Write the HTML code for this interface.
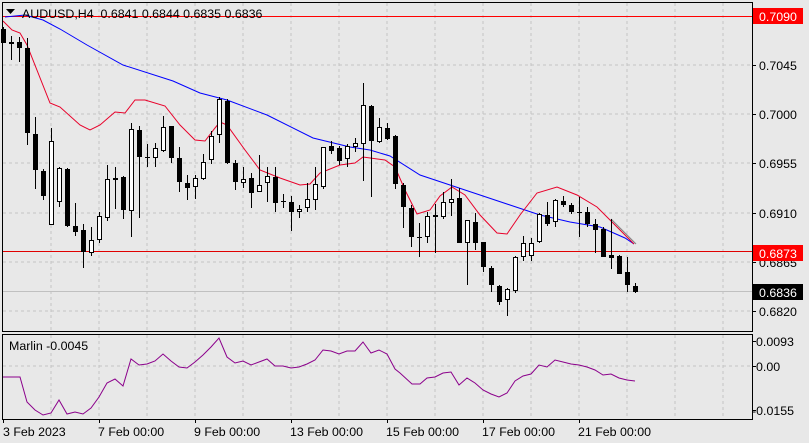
<!DOCTYPE html>
<html><head><meta charset="utf-8"><style>
html,body{margin:0;padding:0;background:#e8e8e8;}
svg{display:block;}
text{font-family:"Liberation Sans",sans-serif;font-size:12.4px;fill:#000;}
</style></head><body>
<svg width="809" height="443" viewBox="0 0 809 443" xmlns="http://www.w3.org/2000/svg">
<rect width="809" height="443" fill="#e8e8e8"/>
<g stroke="#c4c4c4" stroke-dasharray="3,3" stroke-width="1" shape-rendering="crispEdges">
<path d="M51 3V331M99 3V331M147 3V331M195 3V331M243 3V331M291 3V331M339 3V331M387 3V331M435 3V331M483 3V331M531 3V331M579 3V331M627 3V331M675 3V331M723 3V331"/>
<path d="M3 65H752M3 114H752M3 163H752M3 213H752M3 262H752M3 311H752"/>
<path d="M51 335V418M99 335V418M147 335V418M195 335V418M243 335V418M291 335V418M339 335V418M387 335V418M435 335V418M483 335V418M531 335V418M579 335V418M627 335V418M675 335V418M723 335V418"/>
<path d="M3 366H752"/>
</g>
<g shape-rendering="crispEdges">
<line x1="3" y1="16.5" x2="752" y2="16.5" stroke="#ff0000"/>
<line x1="3" y1="251.5" x2="752" y2="251.5" stroke="#e00000"/>
<line x1="3" y1="291.5" x2="752" y2="291.5" stroke="#c0c0c0"/>
</g>
<polyline fill="none" stroke="#0000ff" stroke-width="1" points="5,17 25,15 43,20 60,29 87,45 123,65 173,81 200,93 227,100 267,115 313,138 350,147 370,150 390,156 420,175 450,185 480,195 510,205 540,215 570,222 600,227 625,238 634,244"/>
<polyline fill="none" stroke="#e8002a" stroke-width="1" points="3,21 12,30 20,33 27,45 50,103 60,107 80,125 90,130 100,125 115,112 125,113 135,100 145,100 165,106 180,125 195,140 205,141 215,128 220,122 227,125 245,150 260,170 280,178 300,185 310,184 320,173 340,165 355,163 363,157 385,160 395,167 405,190 417,214 430,210 440,196 452,187 465,195 480,215 497,233 507,234 520,215 537,193 557,187 577,195 597,207 615,225 634,244"/>
<line x1="611" y1="219" x2="636" y2="244" stroke="#808080"/>
<g shape-rendering="crispEdges">
<path stroke="#000" fill="none" d="M3.5 27V43M11.5 36V60M19.5 37V62M27.5 38V145M35.5 117V189M43.5 169V200M51.5 128V225M59.5 167V207M67.5 168V227M75.5 203V236M83.5 224V268M91.5 227V256M99.5 212V243M107.5 165V221M115.5 167V209M123.5 176V219M131.5 123V237M139.5 126V218M147.5 144V167M155.5 143V167M163.5 116V152M171.5 126V163M179.5 147V192M187.5 175V200M195.5 175V199M203.5 154V180M211.5 131V164M219.5 97V143M227.5 99V164M235.5 160V190M243.5 167V188M251.5 173V208M259.5 155V192M267.5 167V202M275.5 167V212M283.5 194V208M291.5 196V231M299.5 205V218M307.5 183V212M315.5 167V210M323.5 147V189M331.5 141V154M339.5 146V165M347.5 144V167M355.5 138V152M363.5 83V181M371.5 105V197M379.5 118V143M387.5 123V140M395.5 135V189M403.5 183V228M411.5 205V247M419.5 223V257M427.5 212V243M435.5 204V253M443.5 192V219M451.5 179V216M459.5 188V243M467.5 220V285M475.5 213V250M483.5 242V272M491.5 266V292M499.5 285V305M507.5 288V316M515.5 256V293M523.5 236V261M531.5 238V261M539.5 213V243M547.5 202V226M555.5 199V227M563.5 196V207M571.5 203V214M579.5 197V237M587.5 207V227M595.5 219V253M603.5 227V257M611.5 219V269M619.5 255V274M627.5 257V292M635.5 283V293"/>
<g fill="#000">
<rect x="1" y="29" width="5" height="14"/><rect x="9" y="42" width="5" height="2"/><rect x="17" y="42" width="5" height="6"/><rect x="25" y="48" width="5" height="85"/><rect x="33" y="134" width="5" height="36"/><rect x="41" y="171" width="5" height="25"/><rect x="65" y="169" width="5" height="57"/><rect x="73" y="226" width="5" height="6"/><rect x="81" y="230" width="5" height="22"/><rect x="113" y="178" width="5" height="2"/><rect x="121" y="177" width="5" height="33"/><rect x="137" y="130" width="5" height="27"/><rect x="145" y="157" width="5" height="1"/><rect x="169" y="126" width="5" height="32"/><rect x="177" y="158" width="5" height="24"/><rect x="185" y="183" width="5" height="5"/><rect x="225" y="101" width="5" height="62"/><rect x="233" y="163" width="5" height="19"/><rect x="249" y="178" width="5" height="15"/><rect x="273" y="177" width="5" height="26"/><rect x="281" y="201" width="5" height="1"/><rect x="289" y="202" width="5" height="10"/><rect x="329" y="146" width="5" height="5"/><rect x="337" y="148" width="5" height="13"/><rect x="369" y="106" width="5" height="35"/><rect x="385" y="128" width="5" height="11"/><rect x="393" y="136" width="5" height="48"/><rect x="401" y="185" width="5" height="22"/><rect x="409" y="208" width="5" height="29"/><rect x="417" y="237" width="5" height="1"/><rect x="457" y="198" width="5" height="45"/><rect x="473" y="222" width="5" height="21"/><rect x="481" y="242" width="5" height="25"/><rect x="489" y="268" width="5" height="17"/><rect x="497" y="286" width="5" height="16"/><rect x="545" y="215" width="5" height="9"/><rect x="561" y="201" width="5" height="4"/><rect x="569" y="205" width="5" height="7"/><rect x="577" y="212" width="5" height="1"/><rect x="585" y="212" width="5" height="12"/><rect x="593" y="224" width="5" height="6"/><rect x="601" y="229" width="5" height="28"/><rect x="609" y="255" width="5" height="3"/><rect x="617" y="256" width="5" height="18"/><rect x="625" y="272" width="5" height="13"/><rect x="633" y="286" width="5" height="6"/>
</g>
<g fill="#fff" stroke="#000">
<rect x="49.5" y="141.5" width="4" height="83"/><rect x="57.5" y="168.5" width="4" height="33"/><rect x="89.5" y="240.5" width="4" height="12"/><rect x="97.5" y="216.5" width="4" height="23"/><rect x="105.5" y="179.5" width="4" height="38"/><rect x="129.5" y="129.5" width="4" height="81"/><rect x="153.5" y="148.5" width="4" height="9"/><rect x="161.5" y="127.5" width="4" height="23"/><rect x="193.5" y="178.5" width="4" height="8"/><rect x="201.5" y="162.5" width="4" height="16"/><rect x="209.5" y="136.5" width="4" height="23"/><rect x="217.5" y="99.5" width="4" height="35"/><rect x="241.5" y="179.5" width="4" height="3"/><rect x="257.5" y="185.5" width="4" height="6"/><rect x="265.5" y="176.5" width="4" height="6"/><rect x="297.5" y="209.5" width="4" height="2"/><rect x="305.5" y="199.5" width="4" height="8"/><rect x="313.5" y="184.5" width="4" height="15"/><rect x="321.5" y="147.5" width="4" height="39"/><rect x="345.5" y="146.5" width="4" height="12"/><rect x="353.5" y="143.5" width="4" height="3"/><rect x="361.5" y="105.5" width="4" height="38"/><rect x="377.5" y="127.5" width="4" height="14"/><rect x="425.5" y="216.5" width="4" height="20"/><rect x="433.5" y="215.5" width="4" height="1"/><rect x="441.5" y="202.5" width="4" height="14"/><rect x="449.5" y="199.5" width="4" height="3"/><rect x="465.5" y="220.5" width="4" height="22"/><rect x="505.5" y="289.5" width="4" height="10"/><rect x="513.5" y="257.5" width="4" height="33"/><rect x="521.5" y="243.5" width="4" height="13"/><rect x="529.5" y="243.5" width="4" height="12"/><rect x="537.5" y="214.5" width="4" height="27"/><rect x="553.5" y="200.5" width="4" height="21"/>
</g>
</g>
<polyline fill="none" stroke="#8b008b" stroke-width="1" points="3,377 20,377 27,402 35,410 43,415 51,413 59,400 67,414 75,412 83,414 91,408 99,397 107,383 115,379 123,386 131,359 139,365 147,364 155,361 163,354 171,361 179,367 187,368 195,362 203,355 211,347 219,338 227,357 235,363 243,361 251,365 259,362 267,359 275,366 283,366 291,368 299,367 307,364 315,360 323,350 331,351 339,354 347,351 355,351 363,342 371,353 379,350 387,354 395,369 400,373 412,384 420,384 427,378 435,377 443,373 451,372 459,385 467,378 475,383 483,390 491,394 499,397 507,393 515,381 523,376 531,374 539,365 547,367 555,360 563,362 571,364 579,365 587,367 595,370 603,375 611,374 619,378 627,380 635,381"/>
<g fill="none" stroke="#000" shape-rendering="crispEdges">
<rect x="2.5" y="2.5" width="750" height="329"/>
<rect x="2.5" y="334.5" width="750" height="85"/>
<path d="M752 16.5h4M752 65.5h4M752 114.5h4M752 163.5h4M752 213.5h4M752 262.5h4M752 311.5h4M752 341.5h4M752 366.5h4M752 410.5h4"/>
<path d="M3.5 419v4M99.5 419v4M195.5 419v4M291.5 419v4M387.5 419v4M483.5 419v4M579.5 419v4"/>
</g>
<path d="M6 9h9l-4.5 5z" fill="#000"/>
<text x="22" y="18" xml:space="preserve">AUDUSD,H4  0.6841 0.6844 0.6835 0.6836</text>
<text x="9" y="350">Marlin -0.0045</text>
<rect x="753" y="8" width="50" height="16" fill="#ff0000"/>
<text x="759" y="21" style="fill:#fff">0.7090</text>
<text x="759" y="70">0.7045</text>
<text x="759" y="119">0.7000</text>
<text x="759" y="168">0.6955</text>
<text x="759" y="218">0.6910</text>
<text x="759" y="267">0.6865</text>
<rect x="753" y="245" width="50" height="16" fill="#ff0000"/>
<text x="759" y="258" style="fill:#fff">0.6873</text>
<rect x="753" y="284" width="50" height="16" fill="#000"/>
<text x="759" y="297" style="fill:#fff">0.6836</text>
<text x="759" y="316">0.6820</text>
<text x="756" y="346">0.0093</text>
<text x="756" y="371">0.00</text>
<text x="752" y="415">-0.0155</text>
<text x="3" y="436">3 Feb 2023</text>
<text x="98" y="436">7 Feb 00:00</text>
<text x="194" y="436">9 Feb 00:00</text>
<text x="290" y="436">13 Feb 00:00</text>
<text x="386" y="436">15 Feb 00:00</text>
<text x="482" y="436">17 Feb 00:00</text>
<text x="578" y="436">21 Feb 00:00</text>
</svg>
</body></html>
